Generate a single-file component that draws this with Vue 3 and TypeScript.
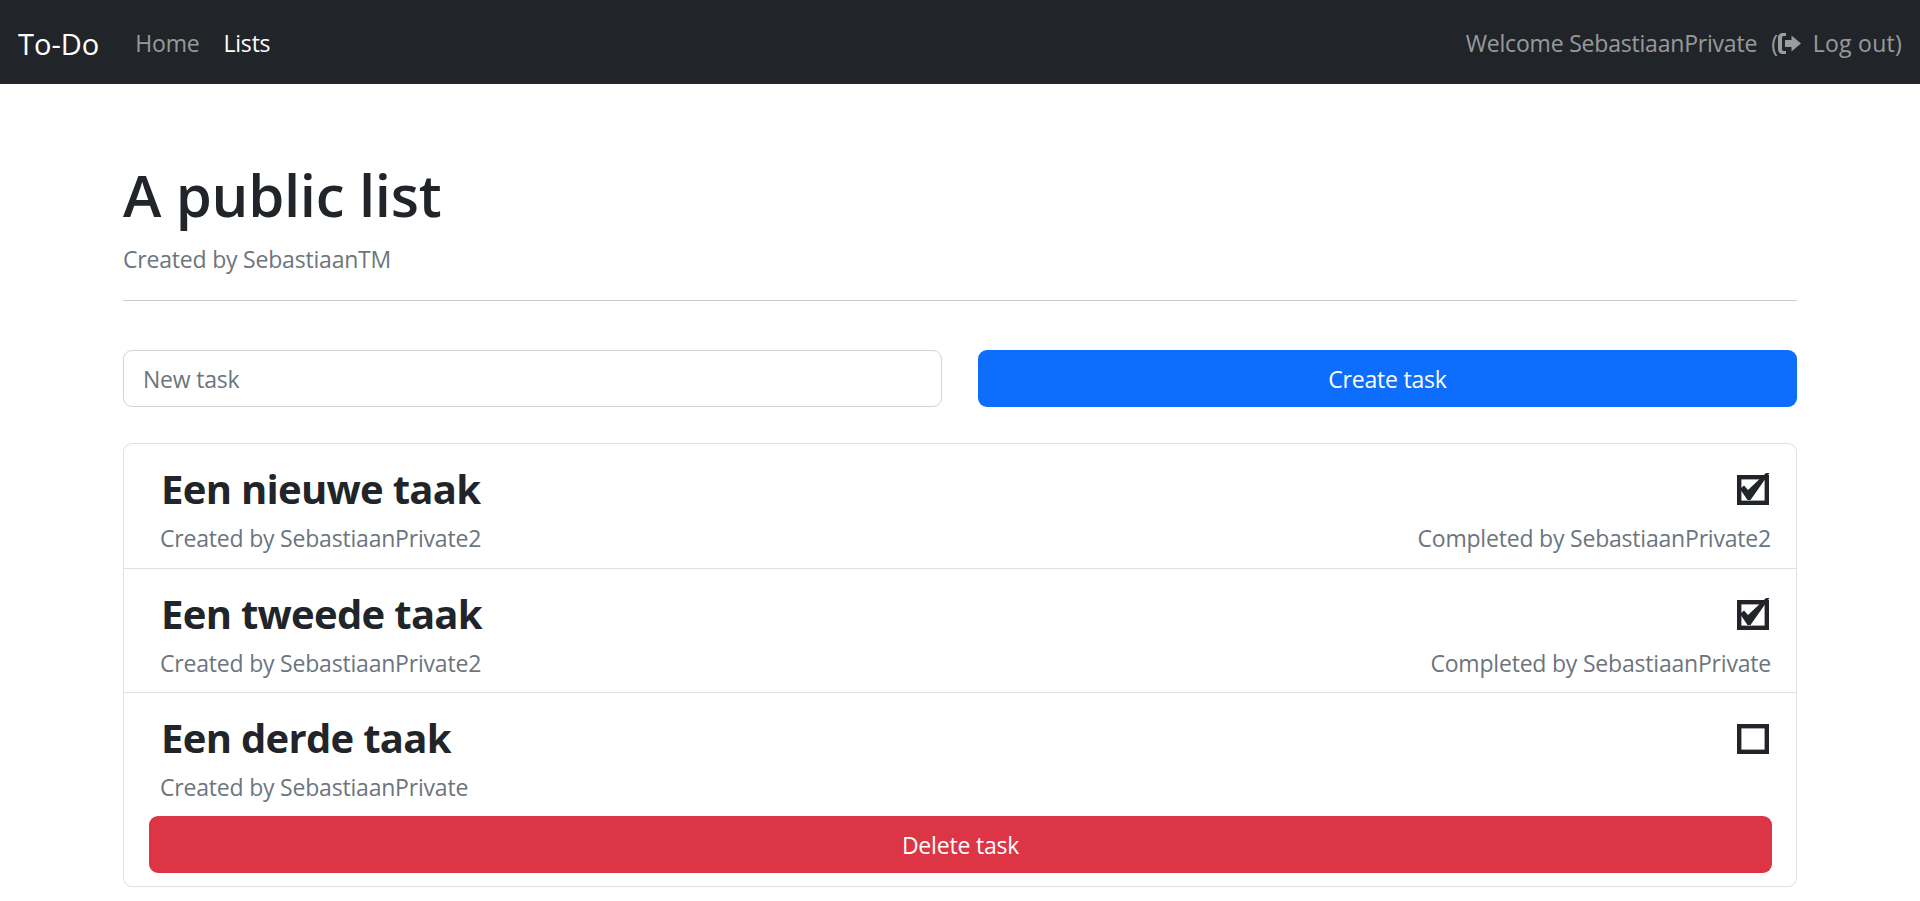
<script setup lang="ts">
import { ref } from 'vue'

interface Task {
  title: string
  createdBy: string
  completedBy?: string
}

const tasks = ref<Task[]>([
  { title: 'Een nieuwe taak', createdBy: 'SebastiaanPrivate2', completedBy: 'SebastiaanPrivate2' },
  { title: 'Een tweede taak', createdBy: 'SebastiaanPrivate2', completedBy: 'SebastiaanPrivate' },
  { title: 'Een derde taak', createdBy: 'SebastiaanPrivate' },
])

const newTask = ref('')
</script>

<template>
  <nav class="navbar">
    <div class="nav-left">
      <a class="brand">To-Do</a>
      <a class="nav-link">Home</a>
      <a class="nav-link active">Lists</a>
    </div>
    <div class="nav-right">
      <span>Welcome SebastiaanPrivate</span>
      <a class="logout">
        (<svg class="logout-icon" viewBox="0 0 23 21" aria-hidden="true">
          <path d="M8 0H5C2 0 0 2 0 5v11c0 3 2 5 5 5h3v-3H5.500C4.500 18 4 17 4 16V5c0-1 .5-2 1.500-2H8z" />
          <path d="M13.500 2.500 23 10.500l-9.500 8V14H7V7h6.500z" />
        </svg>
        <span class="logout-text">Log out)</span>
      </a>
    </div>
  </nav>

  <main class="container">
    <header class="page-head">
      <h1>A public list</h1>
      <p class="muted">Created by SebastiaanTM</p>
    </header>
    <hr />

    <form class="new-task" @submit.prevent>
      <input v-model="newTask" type="text" placeholder="New task" />
      <button class="btn btn-primary" type="submit">Create task</button>
    </form>

    <ul class="task-list">
      <li v-for="task in tasks" :key="task.title" class="task">
        <div class="task-row">
          <h3>{{ task.title }}</h3>
          <svg class="check" viewBox="0 0 34 34" aria-hidden="true">
            <rect x="3.200" y="5.200" width="27.600" height="25.600" fill="none" stroke="#212529" stroke-width="4.400" />
            <path v-if="task.completedBy" d="M4 17l4-3.500 4 4.500L30 1h3.500L14.500 28h-3z" fill="#212529" />
          </svg>
        </div>
        <div class="task-row sub">
          <span class="muted">Created by {{ task.createdBy }}</span>
          <span v-if="task.completedBy" class="muted">Completed by {{ task.completedBy }}</span>
        </div>
      </li>
      <li class="delete-row">
        <button class="btn btn-danger" type="button">Delete task</button>
      </li>
    </ul>
  </main>
</template>

<style scoped>
.navbar {
  display: flex;
  justify-content: space-between;
  align-items: center;
  box-sizing: border-box;
  height: 84px;
  padding: 2px 18px 0;
  background: #212529;
  font-size: 23px;
  letter-spacing: -0.2px;
  color: rgba(255, 255, 255, 0.55);
}

.nav-left,
.nav-right {
  display: flex;
  align-items: center;
}

.brand {
  margin-right: 36px;
  font-size: 29px;
  letter-spacing: 0;
  color: #fff;
}

.nav-link {
  margin-right: 24px;
}

.nav-link.active {
  color: #fff;
}

.logout {
  display: flex;
  align-items: center;
  margin-left: 14px;
}

.logout-icon {
  width: 23px;
  height: 21px;
  fill: rgba(255, 255, 255, 0.55);
}

.logout-text {
  margin-left: 12px;
  letter-spacing: 0.25px;
}

.container {
  padding: 75px 123px 0;
}

h1 {
  margin: 0;
  font-size: 58px;
  font-weight: 600;
  letter-spacing: -0.3px;
  line-height: 72px;
  color: #212529;
}

.page-head p {
  margin: 10px 0 0;
}

.muted {
  color: #6c757d;
  font-size: 23px;
  letter-spacing: -0.2px;
  line-height: 36px;
}

hr {
  margin: 23px 0 49px;
  border: 0;
  border-top: 1px solid #c8c9ca;
}

.new-task {
  display: grid;
  grid-template-columns: 1fr 1fr;
  column-gap: 36px;
  margin-bottom: 36px;
}

input {
  box-sizing: border-box;
  height: 57px;
  padding: 0 19px;
  border: 1px solid #ced4da;
  border-radius: 9px;
  font: inherit;
  font-size: 23px;
  letter-spacing: -0.2px;
  color: #212529;
  outline: none;
}

input::placeholder {
  color: #6c757d;
  opacity: 1;
}

.btn {
  height: 57px;
  border: 0;
  border-radius: 9px;
  font: inherit;
  font-size: 23px;
  letter-spacing: -0.2px;
  color: #fff;
}

.btn-primary {
  background: #0d6efd;
}

.btn-danger {
  width: 100%;
  background: #dc3545;
}

.task-list {
  margin: 0;
  padding: 0;
  list-style: none;
  border: 1px solid #dfdfdf;
  border-radius: 9px;
}

.task {
  box-sizing: border-box;
  height: 124px;
  padding: 20px 25px 0 37px;
  border-bottom: 1px solid #dfdfdf;
}

.task:first-child {
  height: 125px;
}

.task:nth-last-child(2) {
  height: 123px;
  border-bottom: 0;
}

.task-row {
  display: flex;
  justify-content: space-between;
  align-items: center;
}

.task-row.sub {
  margin: 6px 0 0 -1px;
}

h3 {
  margin: 0;
  font-size: 40px;
  font-weight: 700;
  letter-spacing: -0.7px;
  line-height: 50px;
  color: #212529;
}

.check {
  width: 34px;
  height: 34px;
  margin-right: 1px;
}

.delete-row {
  padding: 0 24px 13px 25px;
}
</style>

<style>
body {
  background: #fff;
  font-family: "Open Sans", "Noto Sans", sans-serif;
}
</style>
